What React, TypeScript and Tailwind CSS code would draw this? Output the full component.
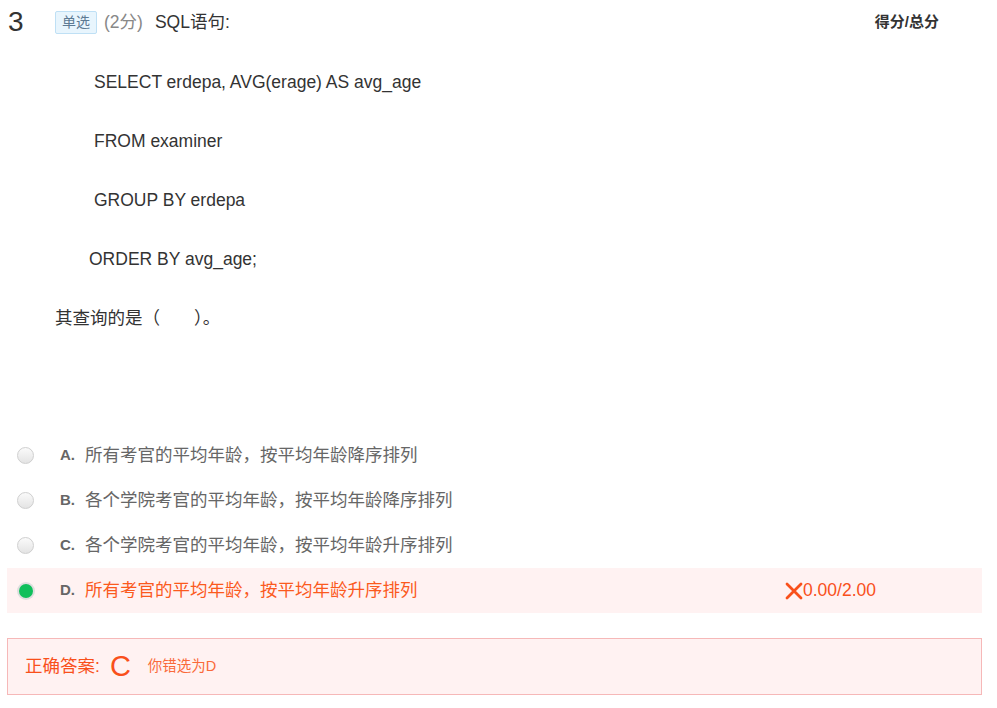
import React from "react";

const sqlLines = [
  { text: "SELECT erdepa, AVG(erage) AS avg_age", indent: "pl-[39px]" },
  { text: "FROM examiner", indent: "pl-[39px]" },
  { text: "GROUP BY erdepa", indent: "pl-[39px]" },
  { text: "ORDER BY avg_age;", indent: "pl-[34px]" },
];

const options = [
  { key: "A", text: "所有考官的平均年龄，按平均年龄降序排列" },
  { key: "B", text: "各个学院考官的平均年龄，按平均年龄降序排列" },
  { key: "C", text: "各个学院考官的平均年龄，按平均年龄升序排列" },
  { key: "D", text: "所有考官的平均年龄，按平均年龄升序排列", chosen: true },
];

const Radio: React.FC<{ checked?: boolean }> = ({ checked }) =>
  checked ? (
    <span className="w-[18px] h-[18px] rounded-full bg-[#dedede] flex items-center justify-center">
      <span className="w-[14px] h-[14px] rounded-full bg-[#0fbf5b]" />
    </span>
  ) : (
    <span className="w-[17px] h-[17px] rounded-full border border-[#cfcfcf] bg-gradient-to-b from-[#fafafa] to-[#e4e4e4]" />
  );

const App: React.FC = () => {
  return (
    <div
      className="w-[997px] h-[708px] bg-white text-[#333] overflow-hidden"
      style={{ fontFamily: '"Liberation Sans", Arial, "Noto Sans CJK SC", sans-serif' }}
    >
      {/* header */}
      <div className="flex items-center h-[44px] pl-[8px]">
        <span className="text-[28px] leading-none text-[#333] w-[47px]">3</span>
        <span className="h-[23px] px-[6px] flex items-center border border-[#bfe0f5] bg-[#e8f5fd] text-[14px] text-[#5d7a93] rounded-[2px]">
          单选
        </span>
        <span className="ml-[7px] text-[17.5px] text-[#888]">(2分)</span>
        <span className="ml-[12px] text-[17.5px] text-[#333]">SQL语句:</span>
        <span className="ml-auto mr-[58px] text-[15px] font-bold text-[#333]">得分/总分</span>
      </div>

      {/* stem */}
      <div className="pl-[55px] mt-[9px] text-[17.5px] text-[#333]">
        {sqlLines.map((l) => (
          <p key={l.text} className={`h-[59px] leading-[59px] ${l.indent}`}>
            {l.text}
          </p>
        ))}
        <p className="h-[59px] leading-[59px]">
          其查询的是（&nbsp;&nbsp;&nbsp;&nbsp;&nbsp;&nbsp;&nbsp;）。
        </p>
      </div>

      {/* options */}
      <div className="ml-[7px] w-[975px] mt-[85px]">
        {options.map((o) => (
          <div
            key={o.key}
            className={`flex items-center h-[45px] pl-[10px] ${o.chosen ? "bg-[#fff2f2]" : ""}`}
          >
            <Radio checked={o.chosen} />
            <span className={`${o.chosen ? "ml-[25px]" : "ml-[26px]"} w-[25px] text-[15px] font-bold text-[#666]`}>
              {o.key}.
            </span>
            <span
              className={`w-[700px] text-[17.5px] ${o.chosen ? "text-[#fb5a1e]" : "text-[#666]"}`}
            >
              {o.text}
            </span>
            {o.chosen && (
              <span className="flex items-center text-[17.5px] text-[#f9501b]">
                <svg width="18" height="18" viewBox="0 0 18 18">
                  <path d="M2 2 L16 16 M16 2 L2 16" stroke="#f9501b" strokeWidth="2.8" strokeLinecap="round" />
                </svg>
                0.00/2.00
              </span>
            )}
          </div>
        ))}
      </div>

      {/* answer */}
      <div className="ml-[7px] w-[975px] mt-[25px] h-[57px] border border-[#f6b8b8] bg-[#fff2f2] flex items-center pl-[17px] text-[#f9501b]">
        <span className="text-[17.5px]">正确答案:</span>
        <span className="ml-[10px] text-[29px] leading-none font-light">C</span>
        <span className="ml-[17px] text-[14.5px] text-[#fa6a3a]">你错选为D</span>
      </div>
    </div>
  );
};

export default App;
